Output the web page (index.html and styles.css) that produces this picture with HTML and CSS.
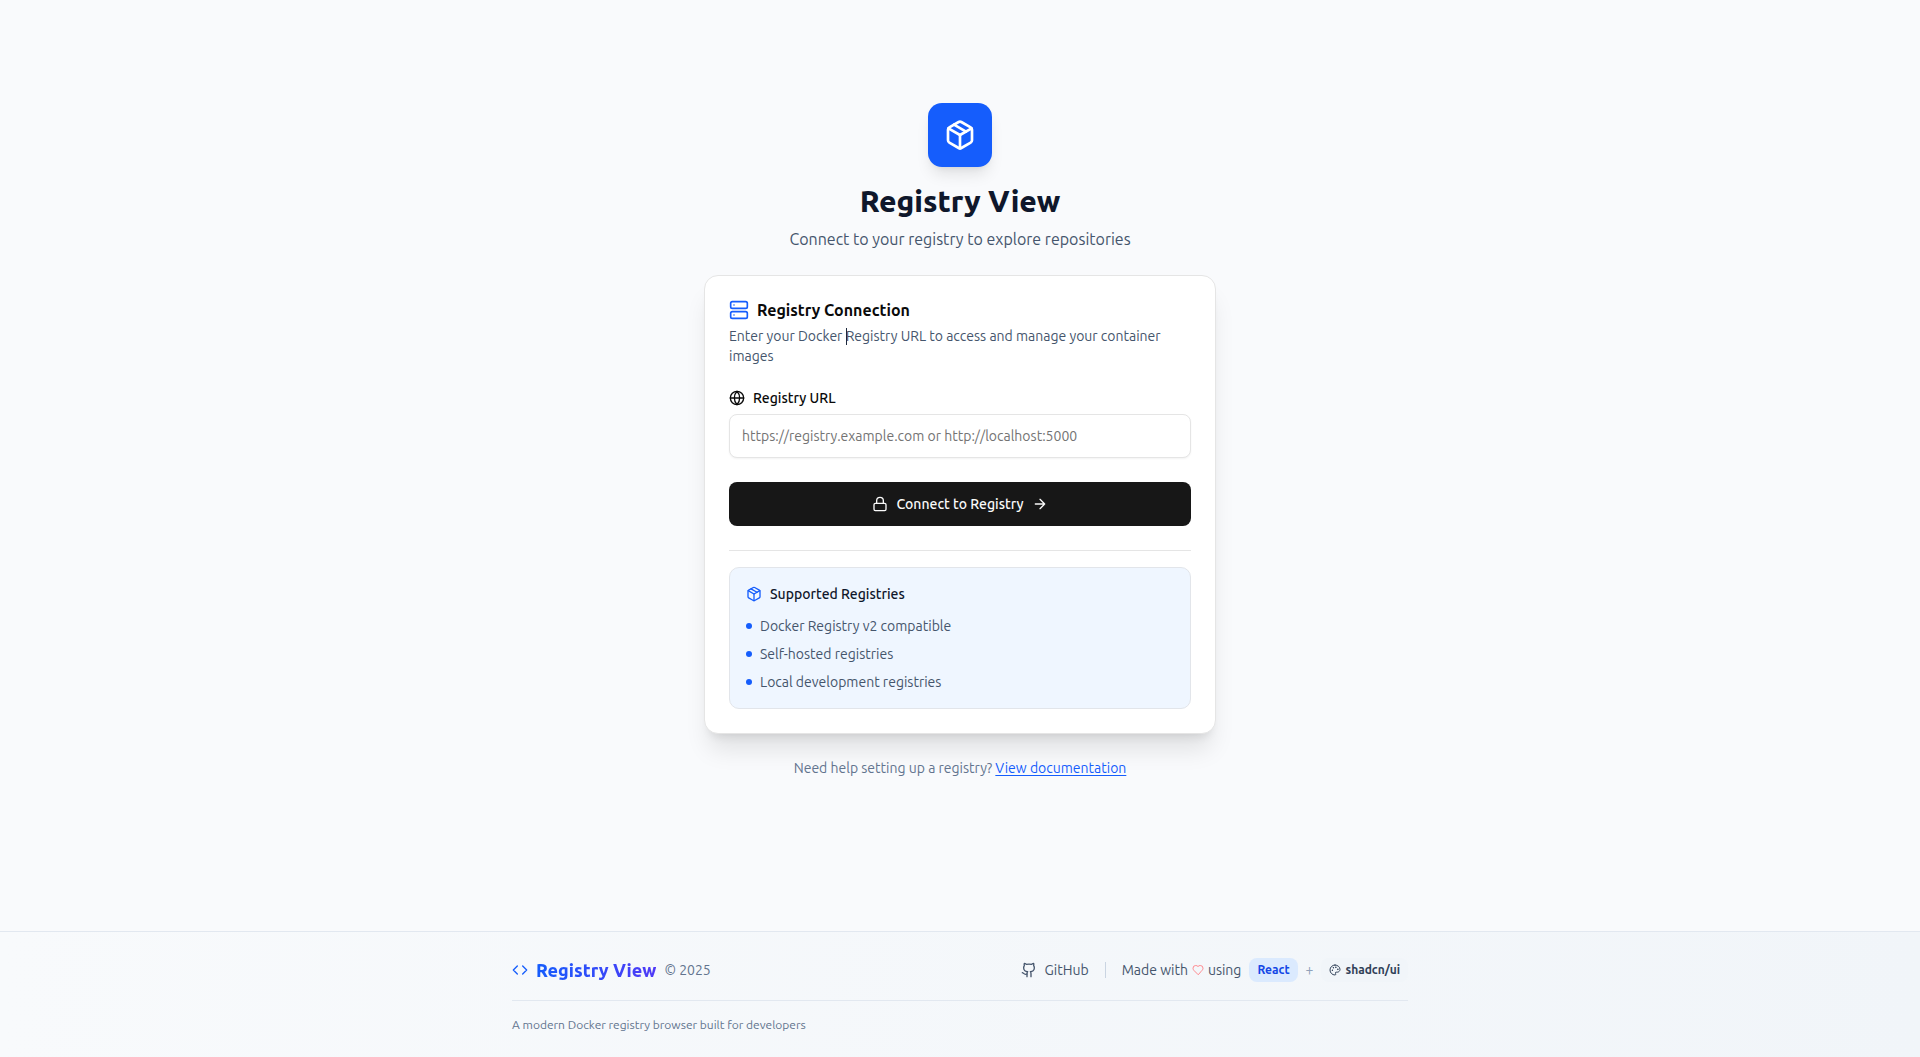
FILE: index.html
```html
<!DOCTYPE html>
<html lang="en">
<head>
  <meta charset="utf-8">
  <meta name="viewport" content="width=device-width, initial-scale=1">
  <title>Registry View</title>
  <link rel="stylesheet" href="styles.css">
</head>
<body>
  <svg class="sprite" aria-hidden="true">
    <symbol id="package" viewBox="0 0 24 24">
      <path d="M11 21.73a2 2 0 0 0 2 0l7-4A2 2 0 0 0 21 16V8a2 2 0 0 0-1-1.73l-7-4a2 2 0 0 0-2 0l-7 4A2 2 0 0 0 3 8v8a2 2 0 0 0 1 1.73z"/>
      <path d="M12 22V12"/>
      <path d="M3.29 7 12 12l8.71-5"/>
      <path d="m7.5 4.27 9 5.15"/>
    </symbol>
  </svg>

  <main class="main">
    <div class="panel">
      <header class="hero">
        <div class="hero-tile"><svg class="icon icon-xl" aria-hidden="true"><use href="#package"/></svg></div>
        <h1 class="hero-title">Registry View</h1>
        <p class="hero-subtitle">Connect to your registry to explore repositories</p>
      </header>

      <section class="card">
        <div class="card-header">
          <h2 class="card-title">
            <svg class="icon icon-lg blue" viewBox="0 0 24 24" aria-hidden="true"><rect width="20" height="8" x="2" y="2" rx="2"/><rect width="20" height="8" x="2" y="14" rx="2"/><path d="M6 6h.01M6 18h.01"/></svg>
            Registry Connection
          </h2>
          <p class="card-description">Enter your Docker <span class="caret"></span>Registry URL to access and manage your container images</p>
        </div>

        <form class="form">
          <div class="field">
            <label class="label" for="registry-url">
              <svg class="icon" viewBox="0 0 24 24" aria-hidden="true"><circle cx="12" cy="12" r="10"/><path d="M12 2a14.5 14.5 0 0 0 0 20 14.5 14.5 0 0 0 0-20M2 12h20"/></svg>
              Registry URL
            </label>
            <input class="input" id="registry-url" type="url" placeholder="https://registry.example.com or http://localhost:5000">
          </div>
          <button class="button" type="submit">
            <svg class="icon" viewBox="0 0 24 24" aria-hidden="true"><rect width="18" height="11" x="3" y="11" rx="2"/><path d="M7 11V7a5 5 0 0 1 10 0v4"/></svg>
            Connect to Registry
            <svg class="icon" viewBox="0 0 24 24" aria-hidden="true"><path d="M5 12h14M12 5l7 7-7 7"/></svg>
          </button>
        </form>

        <div class="card-footer">
          <div class="info">
            <h3 class="info-title"><svg class="icon blue" aria-hidden="true"><use href="#package"/></svg>Supported Registries</h3>
            <ul class="info-list">
              <li>Docker Registry v2 compatible</li>
              <li>Self-hosted registries</li>
              <li>Local development registries</li>
            </ul>
          </div>
        </div>
      </section>

      <p class="help">Need help setting up a registry? <a class="help-link" href="#docs">View documentation</a></p>
    </div>
  </main>

  <footer class="footer">
    <div class="footer-inner">
      <div class="footer-row">
        <div class="brand">
          <svg class="icon blue" viewBox="0 0 24 24" aria-hidden="true"><path d="m16 18 6-6-6-6M8 6l-6 6 6 6"/></svg>
          <span class="brand-name">Registry View</span>
          <span class="copyright">© 2025</span>
        </div>
        <div class="footer-links">
          <a class="github" href="#github">
            <svg class="icon" viewBox="0 0 24 24" aria-hidden="true"><path d="M15 22v-4a4.8 4.8 0 0 0-1-3.5c3 0 6-2 6-5.5.08-1.25-.27-2.48-1-3.5.28-1.15.28-2.35 0-3.5 0 0-1 0-3 1.5-2.64-.5-5.36-.5-8 0C6 2 5 2 5 2c-.3 1.15-.3 2.35 0 3.5A5.403 5.403 0 0 0 4 9c0 3.5 3 5.5 6 5.5-.39.49-.68 1.05-.85 1.65-.17.6-.22 1.23-.15 1.85v4"/><path d="M9 18c-4.51 2-5-2-7-2"/></svg>
            GitHub
          </a>
          <span class="separator"></span>
          <div class="credits">
            <span class="made-with">Made with
              <svg class="icon icon-sm heart" viewBox="0 0 24 24" aria-label="love"><path d="M19 14c1.49-1.46 3-3.21 3-5.5A5.5 5.5 0 0 0 16.5 3c-1.76 0-3 .5-4.5 2-1.5-1.5-2.74-2-4.5-2A5.5 5.5 0 0 0 2 8.5c0 2.3 1.5 4.05 3 5.5l7 7Z"/></svg>
              using</span>
            <a class="badge badge-blue" href="#react">React</a>
            <span class="plus">+</span>
            <a class="badge" href="#shadcn">
              <svg class="icon icon-sm" viewBox="0 0 24 24" aria-hidden="true"><path d="M12 2C6.5 2 2 6.5 2 12s4.5 10 10 10c.926 0 1.648-.746 1.648-1.688 0-.437-.18-.835-.437-1.125-.29-.289-.438-.652-.438-1.125a1.64 1.64 0 0 1 1.668-1.668h1.996c3.051 0 5.555-2.503 5.555-5.554C21.965 6.012 17.461 2 12 2z"/><circle cx="13.5" cy="6.5" r=".5"/><circle cx="17.5" cy="10.5" r=".5"/><circle cx="8.5" cy="7.5" r=".5"/><circle cx="6.5" cy="12.5" r=".5"/></svg>
              shadcn/ui
            </a>
          </div>
        </div>
      </div>
      <p class="tagline">A modern Docker registry browser built for developers</p>
    </div>
  </footer>
</body>
</html>
```
FILE: styles.css
```css
* { box-sizing: border-box; }

body {
  margin: 0;
  min-height: 100vh;
  display: flex;
  flex-direction: column;
  background: #f9fafc;
  color: #0a0a0a;
  font-family: Ubuntu, "Open Sans", "Noto Sans", sans-serif;
  font-size: 14px;
  line-height: 20px;
}

h1, h2, h3, p, ul { margin: 0; padding: 0; }

a { color: inherit; text-decoration: none; }

.sprite { display: none; }

.icon {
  width: 16px;
  height: 16px;
  flex: none;
  fill: none;
  stroke: currentColor;
  stroke-width: 2;
  stroke-linecap: round;
  stroke-linejoin: round;
}
.icon-sm { width: 12px; height: 12px; }
.icon-lg { width: 20px; height: 20px; }
.icon-xl { width: 32px; height: 32px; }
.blue { color: #155dfc; }

.main {
  flex: 1;
  display: flex;
  align-items: center;
  justify-content: center;
  padding: 16px;
}

.panel { width: 100%; max-width: 512px; }

.hero {
  display: flex;
  flex-direction: column;
  align-items: center;
  margin-bottom: 24px;
  text-align: center;
}
.hero-tile {
  display: flex;
  padding: 16px;
  margin-bottom: 16px;
  border-radius: 14px;
  background: #155dfc;
  color: #fff;
  box-shadow: 0 10px 15px -3px rgb(0 0 0 / 10%), 0 4px 6px -4px rgb(0 0 0 / 10%);
}
.hero-title {
  margin-bottom: 8px;
  color: #0f172b;
  font-size: 30px;
  line-height: 36px;
  font-weight: 800;
}
.hero-subtitle { color: #45556c; font-size: 16px; line-height: 24px; }

.card {
  padding: 24px;
  border: 1px solid #e5e5e5;
  border-radius: 14px;
  background: #fff;
  box-shadow: 0 20px 25px -5px rgb(0 0 0 / 10%), 0 8px 10px -6px rgb(0 0 0 / 10%);
}
.card-header { margin-bottom: 24px; }
.card-title {
  display: flex;
  align-items: center;
  gap: 8px;
  margin-bottom: 6px;
  font-size: 16px;
  line-height: 20px;
  font-weight: 700;
}
.card-description { color: #45556c; }
.caret {
  position: absolute;
  width: 1px;
  height: 17px;
  margin-top: 2px;
  background: #1d293d;
}

.form { display: flex; flex-direction: column; gap: 24px; }
.field { display: flex; flex-direction: column; gap: 8px; }
.label {
  display: flex;
  align-items: center;
  gap: 8px;
  line-height: 16px;
  font-weight: 500;
}
.input {
  width: 100%;
  height: 44px;
  padding: 4px 12px;
  border: 1px solid #e5e5e5;
  border-radius: 8px;
  background: #fff;
  box-shadow: 0 1px 2px rgb(0 0 0 / 5%);
  font: inherit;
}
.input::placeholder { color: #737373; opacity: 1; }
.button {
  display: flex;
  align-items: center;
  justify-content: center;
  gap: 8px;
  height: 44px;
  border: 0;
  border-radius: 8px;
  background: #171717;
  color: #fafafa;
  font: inherit;
  font-weight: 500;
}

.card-footer {
  margin-top: 24px;
  padding-top: 16px;
  border-top: 1px solid #e5e5e5;
}
.info {
  padding: 16px;
  border: 1px solid #e2e5ea;
  border-radius: 10px;
  background: #eff6ff;
}
.info-title {
  display: flex;
  align-items: center;
  gap: 8px;
  margin-bottom: 12px;
  color: #0f172b;
  font-size: 14px;
  font-weight: 500;
}
.info-list {
  display: flex;
  flex-direction: column;
  gap: 8px;
  list-style: none;
  color: #45556c;
}
.info-list li { display: flex; align-items: center; gap: 8px; }
.info-list li::before {
  content: "";
  width: 6px;
  height: 6px;
  border-radius: 50%;
  background: #155dfc;
}

.help { margin-top: 24px; color: #62748e; text-align: center; }
.help-link {
  color: #155dfc;
  text-decoration: underline;
  text-underline-offset: 2px;
}

.footer {
  margin-top: 50px;
  padding: 24px;
  border-top: 1px solid #e2e8f0;
  background: linear-gradient(to right, #f8fafc, #f1f5f9);
}
.footer-inner { max-width: 896px; margin: 0 auto; }
.footer-row {
  display: flex;
  align-items: center;
  justify-content: space-between;
  min-height: 28px;
}
.brand, .github, .credits { display: flex; align-items: center; gap: 8px; }
.brand-name {
  background: linear-gradient(to right, #155dfc, #4f39f6);
  background-clip: text;
  color: transparent;
  font-size: 18px;
  line-height: 28px;
  font-weight: 800;
}
.copyright { color: #62748e; }
.footer-links {
  display: flex;
  align-items: center;
  gap: 16px;
  color: #45556c;
}
.separator { width: 1px; height: 16px; background: #cad5e2; }
.made-with { display: flex; align-items: center; gap: 4px; }
.heart { color: #ff8a90; }
.plus { color: #90a1b9; }
.badge {
  display: flex;
  align-items: center;
  gap: 4px;
  padding: 4px 8px;
  border-radius: 8px;
  background: #f1f5f9;
  color: #314158;
  font-size: 12px;
  line-height: 16px;
  font-weight: 600;
}
.badge-blue { background: #dbeafe; color: #1447e6; }
.tagline {
  margin-top: 16px;
  padding-top: 16px;
  border-top: 1px solid #e2e8f0;
  color: #62748e;
  font-size: 12px;
  line-height: 16px;
}
```
